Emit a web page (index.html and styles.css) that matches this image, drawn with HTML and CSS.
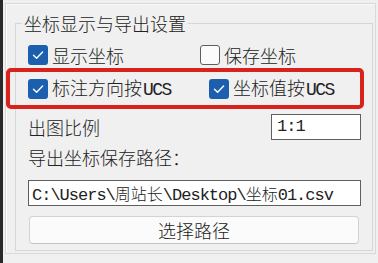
FILE: index.html
```html
<!DOCTYPE html>
<html lang="zh-CN">
<head>
<meta charset="utf-8">
<title>坐标显示与导出设置</title>
<link rel="stylesheet" href="styles.css">
</head>
<body>
<div class="window">
  <div class="edge"></div>
  <div class="frame">
    <fieldset class="group">
      <legend class="group-title">坐标显示与导出设置</legend>
      <div class="row row-first">
        <label class="check"><span class="box on"><svg viewBox="0 0 20 20" width="20" height="20"><path d="M5.5 10.2 L8.6 13.2 L14.6 7" fill="none" stroke="#fff" stroke-width="1.4" stroke-linecap="round" stroke-linejoin="round"/></svg></span><span class="text">显示坐标</span></label>
        <label class="check"><span class="box"></span><span class="text">保存坐标</span></label>
      </div>
      <div class="row row-hl">
        <label class="check"><span class="box on"><svg viewBox="0 0 20 20" width="20" height="20"><path d="M5.5 10.2 L8.6 13.2 L14.6 7" fill="none" stroke="#fff" stroke-width="1.4" stroke-linecap="round" stroke-linejoin="round"/></svg></span><span class="text">标注方向按<span class="lat">UCS</span></span></label>
        <label class="check"><span class="box on"><svg viewBox="0 0 20 20" width="20" height="20"><path d="M5.5 10.2 L8.6 13.2 L14.6 7" fill="none" stroke="#fff" stroke-width="1.4" stroke-linecap="round" stroke-linejoin="round"/></svg></span><span class="text">坐标值按<span class="lat">UCS</span></span></label>
      </div>
      <div class="row-scale">
        <span class="label">出图比例</span>
        <div class="field scale">1:1</div>
      </div>
      <div class="label path-label">导出坐标保存路径：</div>
      <div class="field path">C:\Users\<span class="cjk">周站长</span>\Desktop\<span class="cjk">坐标</span>01.csv</div>
      <button class="btn" type="button">选择路径</button>
    </fieldset>
  </div>
</div>
</body>
</html>
```
FILE: styles.css
```css
* { box-sizing: border-box; }
html, body {
  margin: 0;
  padding: 0;
  background: #f0f0f0;
}
body {
  width: 378px;
  height: 263px;
  overflow: hidden;
  font-family: "Noto Sans CJK SC", "Noto Sans", sans-serif;
  font-size: 18px;
  font-weight: 300;
  color: #222;
}
.window {
  display: flex;
  height: 263px;
}
.edge {
  width: 3px;
  background: #2a2a2a;
  flex: none;
}
.frame {
  flex: 1;
  margin: 3px 2px 9px 2px;
  border: 1px solid #d9d9d9;
  box-shadow: inset 1px 1px 0 #fbfbfb;
}
.group {
  margin: 7px 2px 0 9px;
  padding: 9px 11px 6px 12px;
  border: 1px solid #d6d6d6;
  min-width: 0;
}
.group-title {
  margin-left: -6px;
  padding: 0 2px;
  line-height: 24px;
  font-size: 18px;
}
.row {
  display: grid;
  align-items: center;
}
.row-first {
  height: 22px;
  grid-template-columns: 172px 1fr;
}
.row-hl {
  margin: 2px -3px 0 -22px;
  height: 41px;
  padding-left: 18px;
  border: 4px solid #d8231d;
  border-radius: 5px;
  grid-template-columns: 181px 1fr;
}
.check {
  display: flex;
  align-items: center;
  gap: 4px;
  line-height: 22px;
  white-space: nowrap;
}
.lat {
  font-family: "Liberation Mono", monospace;
  font-weight: 400;
  font-size: 18px;
  letter-spacing: -1.6px;
  margin-left: 1px;
}
.box {
  width: 20px;
  height: 20px;
  border-radius: 3px;
  border: 1px solid #5e5e5e;
  background: #fbfbfb;
  flex: none;
  display: block;
}
.box.on {
  border: none;
  background: #1c5fae;
}
.box svg { display: block; }
.row-scale {
  margin-top: 5px;
  display: flex;
  align-items: center;
  justify-content: space-between;
  height: 26px;
}
.label {
  line-height: 24px;
}
.path-label {
  margin-top: 5px;
}
.field {
  background: #fff;
  border: 1px solid #5f5f5f;
  height: 26px;
  font-family: "Liberation Mono", "Noto Sans CJK SC", monospace;
  font-weight: 400;
  font-size: 17px;
  letter-spacing: -1px;
  line-height: 24px;
  white-space: nowrap;
  overflow: hidden;
}
.scale {
  width: 90px;
  padding-left: 5px;
}
.path {
  margin-top: 11px;
  padding-left: 3px;
}
.cjk {
  font-family: "Noto Sans CJK SC", sans-serif;
  font-weight: 300;
  font-size: 16px;
  letter-spacing: 0;
}
.btn {
  display: block;
  width: calc(100% - 3px);
  margin: 10px 0 0 1px;
  height: 28px;
  background: #fbfbfb;
  border: 1px solid #d3d3d3;
  border-bottom-color: #c4c4c4;
  border-radius: 4px;
  font-family: "Noto Sans CJK SC", sans-serif;
  font-weight: 300;
  font-size: 18px;
  color: #222;
  line-height: 24px;
  padding: 0;
}
```
